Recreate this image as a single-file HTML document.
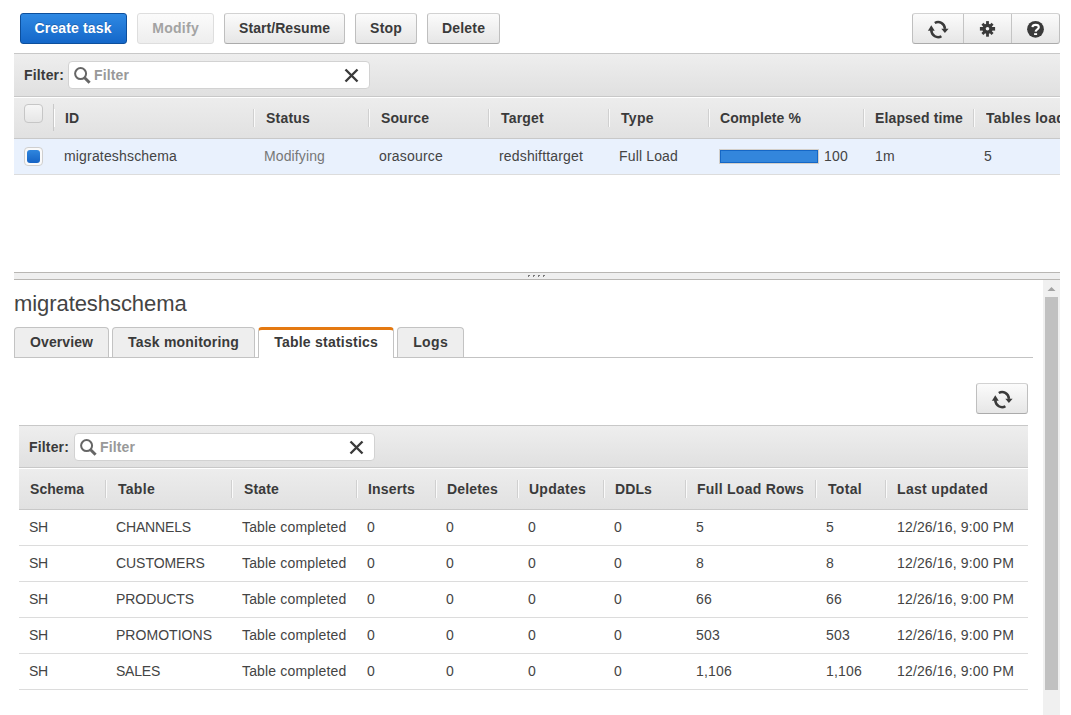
<!DOCTYPE html>
<html><head><meta charset="utf-8">
<style>
*{box-sizing:border-box;margin:0;padding:0}
html,body{width:1071px;height:715px;overflow:hidden;background:#fff;font-family:"Liberation Sans",sans-serif;color:#333;font-size:14px}
.abs{position:absolute}
.btn{position:absolute;top:13px;height:31px;border:1px solid #bfbfbf;border-top-color:#d2d2d2;border-bottom-color:#ababab;border-radius:3px;background:linear-gradient(#fbfbfb,#e6e6e6);font-weight:bold;font-size:14px;color:#3a3a3a;text-align:center;line-height:29px}
.btn.primary{background:linear-gradient(#2f89e3,#1467c9);border-color:#0d4f9c;color:#fff;text-shadow:0 -1px 0 rgba(0,0,0,.2);padding-right:1px}
.btn.dis{color:#a3a3a3;border-color:#dedede;background:linear-gradient(#fbfbfb,#eeeeee)}
.fbar{position:absolute;background:linear-gradient(#eeeeee,#e0e0e0);border-top:1px solid #c8c8c8}
.finput{position:absolute;height:28px;border:1px solid #d2d2d2;border-radius:4px;background:#fff}
.flabel{position:absolute;font-weight:bold;font-size:14px;color:#3a3a3a;line-height:16px}
.ph{position:absolute;font-weight:bold;font-size:14px;color:#999;line-height:16px}
.thead{position:absolute;background:linear-gradient(#ededed,#e1e1e1);border-top:1px solid #c8c8c8;border-bottom:1px solid #c8c8c8;box-shadow:inset 0 1px 0 #fff}
.th{position:absolute;font-weight:bold;font-size:14px;color:#3a3a3a;line-height:16px;white-space:nowrap}
.sep{position:absolute;width:2px;border-left:1px solid #d0d0d0;border-right:1px solid #fafafa}
.td{position:absolute;font-size:14px;color:#444;white-space:nowrap;line-height:16px}
.rowline{position:absolute;height:1px;background:#dcdcdc}
.tab{position:absolute;top:327px;height:30px;border:1px solid #c3c3c3;border-bottom:none;border-radius:4px 4px 0 0;background:#eeeeee;font-weight:bold;font-size:14px;color:#3a3a3a;text-align:center;line-height:29px}
.tab.sel{background:#fff;border-top:3px solid #e47911;line-height:25px;height:31px}
</style></head><body>

<!-- top buttons -->
<div class="btn primary" style="left:20px;width:107px;letter-spacing:0.137px;padding-left:0.137px">Create task</div>
<div class="btn dis" style="left:137px;width:77px;letter-spacing:0.316px;padding-left:0.316px">Modify</div>
<div class="btn" style="left:224px;width:121px;letter-spacing:0.062px;padding-left:0.062px">Start/Resume</div>
<div class="btn" style="left:355px;width:62px;letter-spacing:0.224px;padding-left:0.224px">Stop</div>
<div class="btn" style="left:427px;width:73px;letter-spacing:0.163px;padding-left:0.163px">Delete</div>

<!-- icon group -->
<div class="btn" style="left:912px;width:148px"></div>
<div class="abs" style="left:963px;top:14px;width:1px;height:29px;background:#c4c4c4"></div>
<div class="abs" style="left:1011px;top:14px;width:1px;height:29px;background:#c4c4c4"></div>
<svg class="abs" style="left:920px;top:14px" width="40" height="30" viewBox="0 0 40 30">
 <g fill="none" stroke="#3a3a3a" stroke-width="2.5">
  <path d="M14.8 9.0 A6.9 7.6 0 0 1 25.0 14.9"/>
  <path d="M21.4 22.2 A6.9 7.6 0 0 1 11.2 16.2"/>
 </g>
 <g fill="#3a3a3a">
  <path d="M21.3 14.7 L28.6 14.7 L24.9 18.9 Z"/>
  <path d="M7.9 16.7 L14.7 16.7 L11.3 11.3 Z"/>
 </g>
</svg>
<svg class="abs" style="left:970px;top:14px" width="40" height="30" viewBox="0 0 40 30">
 <g fill="#3a3a3a">
  <circle cx="17.5" cy="14.8" r="5.1"/>
  <rect x="16.1" y="7.1" width="2.8" height="15.6"/>
  <rect x="9.9" y="13.0" width="15.2" height="3.6"/>
  <rect x="16.1" y="7.6" width="2.8" height="14.4" transform="rotate(45 17.5 14.8)"/>
  <rect x="16.1" y="7.6" width="2.8" height="14.4" transform="rotate(-45 17.5 14.8)"/>
 </g>
 <circle cx="17.5" cy="14.8" r="1.8" fill="#f3f3f3"/>
</svg>
<svg class="abs" style="left:1020px;top:14px" width="30" height="30" viewBox="0 0 30 30">
 <circle cx="15.5" cy="15.3" r="8.4" fill="#3a3a3a"/>
 <path d="M12.4 13.1 C12.6 11.4 14 10.9 15.6 10.9 C17.6 10.9 18.8 11.9 18.8 13.3 C18.8 15.3 15.8 15.5 15.6 17.7" fill="none" stroke="#fff" stroke-width="2.1"/>
 <rect x="14.1" y="19.2" width="3" height="1.8" fill="#fff"/>
</svg>

<!-- filter bar -->
<div class="fbar" style="left:14px;top:53px;width:1046px;height:43px"></div>
<div class="flabel" style="left:24px;top:67px;letter-spacing:0.159px">Filter:</div>
<div class="finput" style="left:68px;top:61px;width:302px"></div>
<svg class="abs" style="left:68px;top:61px" width="30" height="28" viewBox="0 0 30 28">
 <circle cx="12.6" cy="12.6" r="5.5" fill="none" stroke="#666" stroke-width="2"/>
 <path d="M16.6 16.8 L21.6 21.8" stroke="#666" stroke-width="3"/>
</svg>
<div class="ph" style="left:94px;top:67px;letter-spacing:0.129px">Filter</div>
<svg class="abs" style="left:340px;top:64px" width="24" height="24" viewBox="0 0 24 24">
 <path d="M5.5 5.5 L17.5 17.5 M17.5 5.5 L5.5 17.5" stroke="#3a3a3a" stroke-width="2.4"/>
</svg>

<!-- table header -->
<div class="thead" style="left:14px;top:96px;width:1046px;height:43px"></div>
<div class="abs" style="left:24px;top:104px;width:19px;height:19px;border:1px solid #c6c6c6;border-radius:4px;background:linear-gradient(#f6f6f6,#e6e6e6)"></div>
<div class="abs" style="left:53px;top:104px;width:1px;height:27px;background:#c9c9c9"></div><div class="abs" style="left:54px;top:109px;width:1px;height:18px;background:#fff"></div>
<div class="th" style="left:65px;top:110px;letter-spacing:0.000px">ID</div>
<div class="sep" style="left:253px;top:109px;height:18px"></div>
<div class="th" style="left:266px;top:110px;letter-spacing:0.202px">Status</div>
<div class="sep" style="left:368px;top:109px;height:18px"></div>
<div class="th" style="left:381px;top:110px;letter-spacing:0.090px">Source</div>
<div class="sep" style="left:488px;top:109px;height:18px"></div>
<div class="th" style="left:501px;top:110px;letter-spacing:0.202px">Target</div>
<div class="sep" style="left:608px;top:109px;height:18px"></div>
<div class="th" style="left:621px;top:110px;letter-spacing:0.331px">Type</div>
<div class="sep" style="left:708px;top:109px;height:18px"></div>
<div class="th" style="left:720px;top:110px;letter-spacing:0.088px">Complete %</div>
<div class="sep" style="left:863px;top:109px;height:18px"></div>
<div class="th" style="left:875px;top:110px;letter-spacing:0.136px">Elapsed time</div>
<div class="sep" style="left:973px;top:109px;height:18px"></div>
<div class="th" style="left:986px;top:110px;width:74px;overflow:hidden;letter-spacing:0.280px">Tables loaded</div>

<!-- row -->
<div class="abs" style="left:14px;top:139px;width:1046px;height:36px;background:#e9f1fd;border-bottom:1px solid #dcdcdc"></div>
<div class="abs" style="left:24px;top:147px;width:19px;height:19px;border:1px solid #cfcfcf;border-radius:4px;background:#fafafa"></div>
<div class="abs" style="left:27px;top:150px;width:13px;height:13px;border-radius:3px;background:linear-gradient(#2f86de,#1563c5)"></div>
<div class="td" style="left:64px;top:148px;letter-spacing:0.167px">migrateshschema</div>
<div class="td" style="left:264px;top:148px;color:#777;letter-spacing:0.120px">Modifying</div>
<div class="td" style="left:379px;top:148px;letter-spacing:0.194px">orasource</div>
<div class="td" style="left:499px;top:148px;letter-spacing:0.164px">redshifttarget</div>
<div class="td" style="left:619px;top:148px;letter-spacing:0.156px">Full Load</div>
<div class="abs" style="left:719px;top:149px;width:100px;height:15px;border:1px solid #d3cfc9;background:#3386dc;box-shadow:inset 0 0 0 1px #1567c6"></div>
<div class="td" style="left:824px;top:148px;letter-spacing:0.214px">100</div>
<div class="td" style="left:875px;top:148px;letter-spacing:0.276px">1m</div>
<div class="td" style="left:984px;top:148px;letter-spacing:0.214px">5</div>

<!-- splitter -->
<div class="abs" style="left:14px;top:272px;width:1046px;height:8px;background:#efefef;border-top:1px solid #b8b6b3;border-bottom:1px solid #b8b6b3"></div>
<div class="abs" style="left:528px;top:275px;width:2px;height:1px;background:#7a7a7a;box-shadow:5px 0 0 #7a7a7a,10px 0 0 #7a7a7a,15px 0 0 #7a7a7a"></div>
<div class="abs" style="left:528px;top:275px;width:1px;height:2px;background:#7a7a7a;box-shadow:5px 0 0 #7a7a7a,10px 0 0 #7a7a7a,15px 0 0 #7a7a7a"></div>

<!-- scrollbar -->
<div class="abs" style="left:1043px;top:280px;width:17px;height:435px;background:#f0f0f0"></div>
<div class="abs" style="left:1045px;top:297px;width:13px;height:393px;background:#c1c1c1"></div>
<svg class="abs" style="left:1043px;top:280px" width="17" height="17" viewBox="0 0 17 17"><path d="M4.5 11 L8.5 7 L12.5 11 Z" fill="#a3a3a3"/></svg>

<!-- title -->
<div class="abs" style="left:14px;top:291px;font-size:22px;color:#444;line-height:25px;letter-spacing:-0.070px;letter-spacing:-0.070px">migrateshschema</div>

<!-- tabs -->
<div class="abs" style="left:14px;top:357px;width:1019px;height:1px;background:#c3c3c3"></div>
<div class="tab" style="left:14px;width:95px;letter-spacing:0.092px;padding-left:0.092px">Overview</div>
<div class="tab" style="left:112px;width:143px;letter-spacing:0.207px;padding-left:0.207px">Task monitoring</div>
<div class="tab sel" style="left:258px;width:136px;height:31px;letter-spacing:0.241px;padding-left:0.241px">Table statistics</div>
<div class="tab" style="left:397px;width:67px;letter-spacing:0.390px;padding-left:0.390px">Logs</div>

<!-- refresh btn 2 -->
<div class="abs" style="left:976px;top:383px;width:52px;height:31px;border:1px solid #bfbfbf;border-top-color:#d2d2d2;border-bottom-color:#ababab;border-radius:3px;background:linear-gradient(#fbfbfb,#e6e6e6)"></div>
<svg class="abs" style="left:982px;top:384px" width="40" height="30" viewBox="-2 0 40 30">
 <g fill="none" stroke="#3a3a3a" stroke-width="2.5">
  <path d="M14.8 9.0 A6.9 7.6 0 0 1 25.0 14.9"/>
  <path d="M21.4 22.2 A6.9 7.6 0 0 1 11.2 16.2"/>
 </g>
 <g fill="#3a3a3a">
  <path d="M21.3 14.7 L28.6 14.7 L24.9 18.9 Z"/>
  <path d="M7.9 16.7 L14.7 16.7 L11.3 11.3 Z"/>
 </g>
</svg>

<!-- filter bar 2 -->
<div class="fbar" style="left:19px;top:425px;width:1009px;height:43px"></div>
<div class="flabel" style="left:29px;top:439px;letter-spacing:0.159px">Filter:</div>
<div class="finput" style="left:74px;top:433px;width:301px"></div>
<svg class="abs" style="left:74px;top:433px" width="30" height="28" viewBox="0 0 30 28">
 <circle cx="12.6" cy="12.6" r="5.5" fill="none" stroke="#666" stroke-width="2"/>
 <path d="M16.6 16.8 L21.6 21.8" stroke="#666" stroke-width="3"/>
</svg>
<div class="ph" style="left:100px;top:439px;letter-spacing:0.129px">Filter</div>
<svg class="abs" style="left:345px;top:436px" width="24" height="24" viewBox="0 0 24 24">
 <path d="M5.5 5.5 L17.5 17.5 M17.5 5.5 L5.5 17.5" stroke="#3a3a3a" stroke-width="2.4"/>
</svg>

<!-- table 2 header -->
<div class="thead" style="left:19px;top:467px;width:1009px;height:43px"></div>
<div class="th" style="left:30px;top:481px;letter-spacing:0.051px">Schema</div>
<div class="sep" style="left:105px;top:480px;height:18px"></div>
<div class="th" style="left:118px;top:481px;letter-spacing:0.287px">Table</div>
<div class="sep" style="left:231px;top:480px;height:18px"></div>
<div class="th" style="left:244px;top:481px;letter-spacing:0.153px">State</div>
<div class="sep" style="left:356px;top:480px;height:18px"></div>
<div class="th" style="left:368px;top:481px;letter-spacing:0.156px">Inserts</div>
<div class="sep" style="left:435px;top:480px;height:18px"></div>
<div class="th" style="left:447px;top:481px;letter-spacing:0.170px">Deletes</div>
<div class="sep" style="left:517px;top:480px;height:18px"></div>
<div class="th" style="left:529px;top:481px;letter-spacing:0.252px">Updates</div>
<div class="sep" style="left:603px;top:480px;height:18px"></div>
<div class="th" style="left:615px;top:481px;letter-spacing:0.110px">DDLs</div>
<div class="sep" style="left:685px;top:480px;height:18px"></div>
<div class="th" style="left:697px;top:481px;letter-spacing:0.254px">Full Load Rows</div>
<div class="sep" style="left:815px;top:480px;height:18px"></div>
<div class="th" style="left:828px;top:481px;letter-spacing:0.312px">Total</div>
<div class="sep" style="left:885px;top:480px;height:18px"></div>
<div class="th" style="left:897px;top:481px;letter-spacing:0.324px">Last updated</div>

<div class="td" style="left:29px;top:519px;letter-spacing:-0.224px">SH</div><div class="td" style="left:116px;top:519px;letter-spacing:-0.155px">CHANNELS</div><div class="td" style="left:242px;top:519px;letter-spacing:0.166px">Table completed</div><div class="td" style="left:367px;top:519px;letter-spacing:0.214px">0</div><div class="td" style="left:446px;top:519px;letter-spacing:0.214px">0</div><div class="td" style="left:528px;top:519px;letter-spacing:0.214px">0</div><div class="td" style="left:614px;top:519px;letter-spacing:0.214px">0</div><div class="td" style="left:696px;top:519px;letter-spacing:0.214px">5</div><div class="td" style="left:826px;top:519px;letter-spacing:0.214px">5</div><div class="td" style="left:897px;top:519px;letter-spacing:0.152px">12/26/16, 9:00 PM</div>
<div class="rowline" style="left:19px;top:545px;width:1009px"></div>
<div class="td" style="left:29px;top:555px;letter-spacing:-0.224px">SH</div><div class="td" style="left:116px;top:555px;letter-spacing:-0.050px">CUSTOMERS</div><div class="td" style="left:242px;top:555px;letter-spacing:0.166px">Table completed</div><div class="td" style="left:367px;top:555px;letter-spacing:0.214px">0</div><div class="td" style="left:446px;top:555px;letter-spacing:0.214px">0</div><div class="td" style="left:528px;top:555px;letter-spacing:0.214px">0</div><div class="td" style="left:614px;top:555px;letter-spacing:0.214px">0</div><div class="td" style="left:696px;top:555px;letter-spacing:0.214px">8</div><div class="td" style="left:826px;top:555px;letter-spacing:0.214px">8</div><div class="td" style="left:897px;top:555px;letter-spacing:0.152px">12/26/16, 9:00 PM</div>
<div class="rowline" style="left:19px;top:581px;width:1009px"></div>
<div class="td" style="left:29px;top:591px;letter-spacing:-0.224px">SH</div><div class="td" style="left:116px;top:591px;letter-spacing:-0.070px">PRODUCTS</div><div class="td" style="left:242px;top:591px;letter-spacing:0.166px">Table completed</div><div class="td" style="left:367px;top:591px;letter-spacing:0.214px">0</div><div class="td" style="left:446px;top:591px;letter-spacing:0.214px">0</div><div class="td" style="left:528px;top:591px;letter-spacing:0.214px">0</div><div class="td" style="left:614px;top:591px;letter-spacing:0.214px">0</div><div class="td" style="left:696px;top:591px;letter-spacing:0.214px">66</div><div class="td" style="left:826px;top:591px;letter-spacing:0.214px">66</div><div class="td" style="left:897px;top:591px;letter-spacing:0.152px">12/26/16, 9:00 PM</div>
<div class="rowline" style="left:19px;top:617px;width:1009px"></div>
<div class="td" style="left:29px;top:627px;letter-spacing:-0.224px">SH</div><div class="td" style="left:116px;top:627px;letter-spacing:0.033px">PROMOTIONS</div><div class="td" style="left:242px;top:627px;letter-spacing:0.166px">Table completed</div><div class="td" style="left:367px;top:627px;letter-spacing:0.214px">0</div><div class="td" style="left:446px;top:627px;letter-spacing:0.214px">0</div><div class="td" style="left:528px;top:627px;letter-spacing:0.214px">0</div><div class="td" style="left:614px;top:627px;letter-spacing:0.214px">0</div><div class="td" style="left:696px;top:627px;letter-spacing:0.214px">503</div><div class="td" style="left:826px;top:627px;letter-spacing:0.214px">503</div><div class="td" style="left:897px;top:627px;letter-spacing:0.152px">12/26/16, 9:00 PM</div>
<div class="rowline" style="left:19px;top:653px;width:1009px"></div>
<div class="td" style="left:29px;top:663px;letter-spacing:-0.224px">SH</div><div class="td" style="left:116px;top:663px;letter-spacing:-0.228px">SALES</div><div class="td" style="left:242px;top:663px;letter-spacing:0.166px">Table completed</div><div class="td" style="left:367px;top:663px;letter-spacing:0.214px">0</div><div class="td" style="left:446px;top:663px;letter-spacing:0.214px">0</div><div class="td" style="left:528px;top:663px;letter-spacing:0.214px">0</div><div class="td" style="left:614px;top:663px;letter-spacing:0.214px">0</div><div class="td" style="left:696px;top:663px;letter-spacing:0.193px">1,106</div><div class="td" style="left:826px;top:663px;letter-spacing:0.193px">1,106</div><div class="td" style="left:897px;top:663px;letter-spacing:0.152px">12/26/16, 9:00 PM</div>
<div class="rowline" style="left:19px;top:689px;width:1009px"></div>

</body></html>
